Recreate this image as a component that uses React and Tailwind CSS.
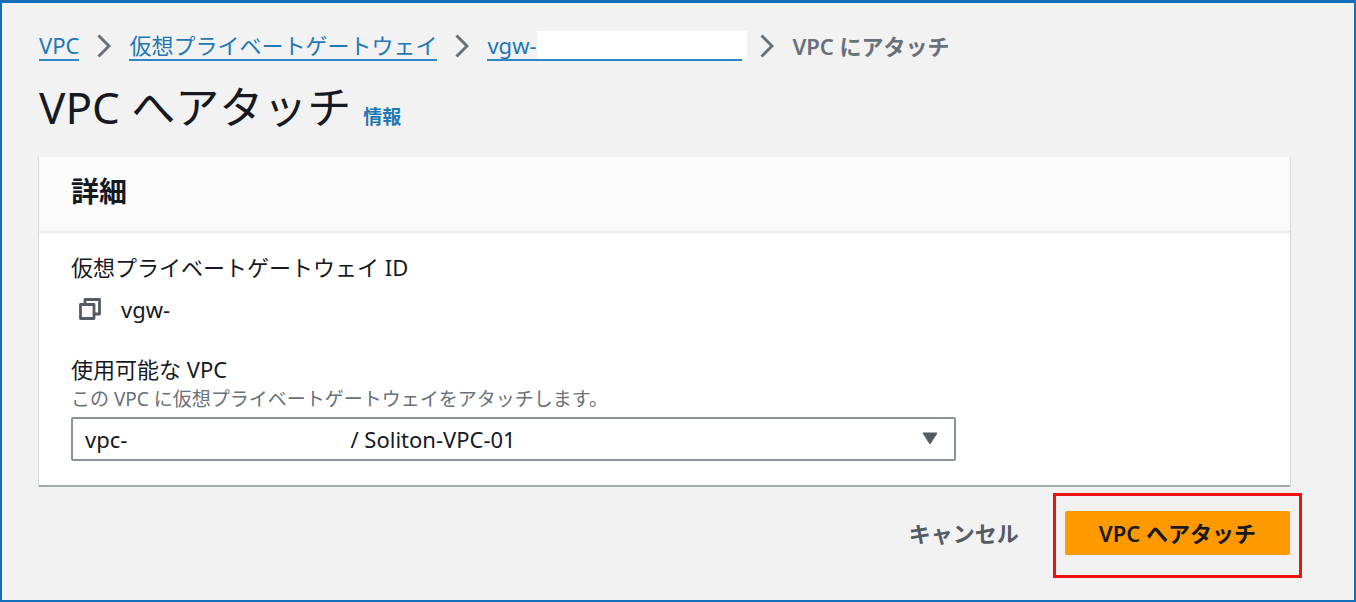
import { useState } from 'react'

const CRUMBS = [
  { label: 'VPC', href: '#vpc' },
  { label: '仮想プライベートゲートウェイ', href: '#gateways' },
  { label: 'vgw-', href: '#gateway', masked: true },
]

// The ID part of the VPC is hidden, so the gap is kept with hard spaces
const VPC_OPTIONS = [
  { value: 'vpc-01', label: `vpc-${'\u00a0'.repeat(39)}/ Soliton-VPC-01` },
]

const ChevronIcon = () => (
  <svg className="mx-[18px] shrink-0" width="14" height="24" viewBox="0 0 14 24" fill="none" aria-hidden="true">
    <path d="M1.5 1.5 12 12 1.5 22.5" stroke="#687078" strokeWidth="3" />
  </svg>
)

const CopyIcon = () => (
  <svg width="22" height="22" viewBox="0 0 22 22" fill="none" aria-hidden="true">
    <path
      d="M6 6V1.5h14.5V16H16M1.5 6.5H15v14H1.5z"
      stroke="#545b64"
      strokeWidth="2.8"
      strokeLinejoin="round"
    />
  </svg>
)

const Breadcrumb = () => (
  <nav aria-label="パンくずリスト">
    <ol className="flex items-center text-[22px] leading-7">
      {CRUMBS.map(({ label, href, masked }) => (
        <li key={href} className="flex items-center">
          <a
            href={href}
            className={`flex border-b-2 border-[#2f86c4] text-[#2178b5] ${masked ? 'w-[255px]' : ''}`}
          >
            {label}
            {masked && <span className="h-7 w-[210px] shrink-0 bg-white" />}
          </a>
          <ChevronIcon />
        </li>
      ))}
      <li className="font-semibold text-[#687078]" aria-current="page">VPC にアタッチ</li>
    </ol>
  </nav>
)

const App = () => {
  const [vpc, setVpc] = useState(VPC_OPTIONS[0].value)

  return (
    <main
      lang="ja"
      className="min-h-screen border-2 border-t-3 border-[#1170b8] bg-[#f2f2f2] pt-7 pr-16 pb-5 pl-[37px] font-['Noto_Sans','Noto_Sans_CJK_JP',sans-serif] text-[#16191f]"
    >
      <Breadcrumb />

      <header className="mt-4 flex items-baseline gap-3">
        <h1 className="text-[44px] leading-[60px]">VPC へアタッチ</h1>
        <a href="#info" className="text-[19px] font-bold text-[#2178b5]">情報</a>
      </header>

      <form onSubmit={(e) => e.preventDefault()}>
        <section className="mt-5 border-b-2 border-[#a3a9a9] bg-white shadow-[1px_0_0_#d5dbdb,-1px_0_0_#d5dbdb]">
          <div className="border-b-2 border-[#eaeded] bg-[#fafafa] px-8 pt-3.5 pb-5">
            <h2 className="text-[28px] leading-10 font-bold">詳細</h2>
          </div>

          <div className="px-8 pt-[18px] pb-6">
            <div className="text-[22px] leading-8">仮想プライベートゲートウェイ ID</div>
            <div className="mt-2.5 flex items-center gap-5 pl-2 text-[22px] leading-8">
              <button type="button" aria-label="コピー">
                <CopyIcon />
              </button>
              <span>vgw-</span>
            </div>

            <label htmlFor="vpc" className="mt-7 block text-[22px] leading-8">使用可能な VPC</label>
            <p id="vpc-hint" className="text-[19px] leading-7 text-[#687078]">
              この VPC に仮想プライベートゲートウェイをアタッチします。
            </p>
            <div className="relative mt-1 max-w-[885px]">
              <select
                id="vpc"
                aria-describedby="vpc-hint"
                value={vpc}
                onChange={(e) => setVpc(e.target.value)}
                className="h-11 w-full appearance-none rounded-xs border-2 border-[#879596] bg-white px-3 text-[22px]"
              >
                {VPC_OPTIONS.map((o) => (
                  <option key={o.value} value={o.value}>{o.label}</option>
                ))}
              </select>
              <svg
                className="pointer-events-none absolute top-[15px] right-[18px]"
                width="16"
                height="13"
                viewBox="0 0 16 13"
                aria-hidden="true"
              >
                <path d="M1 1h14L8 12z" fill="#545b64" stroke="#545b64" strokeLinejoin="round" />
              </svg>
            </div>
          </div>
        </section>

        <div className="mt-6 flex justify-end gap-[46px] text-[22px] font-semibold">
          <button type="button" className="h-11 text-[#545b64]">キャンセル</button>
          <div className="relative">
            <button type="submit" className="h-11 rounded-xs bg-[#ff9900] px-[34px]">VPC へアタッチ</button>
            <div className="pointer-events-none absolute -inset-x-3 -top-[18px] -bottom-[23px] border-3 border-[#ee1111]" />
          </div>
        </div>
      </form>
    </main>
  )
}

export default App
